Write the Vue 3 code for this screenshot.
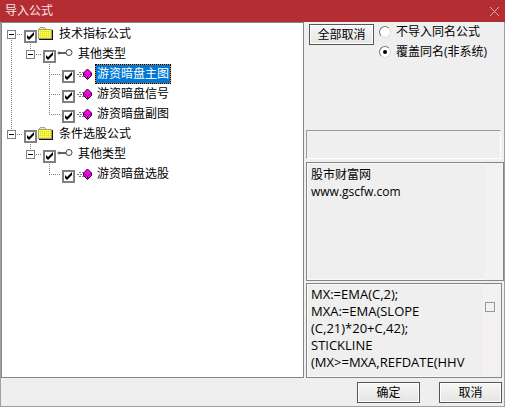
<template>
  <div class="dialog">
    <header class="title-bar">
      <h1 class="title">导入公式</h1>
      <button class="btn-close" type="button" aria-label="关闭">
        <svg width="11" height="11" viewBox="0 0 11 11"><path d="M1 1L10 10M10 1L1 10" stroke="#e6a9ab" fill="none" /></svg>
      </button>
    </header>

    <main class="content">
      <div class="tree">
        <div v-for="nodo in nodos" :key="nodo.id" class="tree-row">
          <svg v-for="(guia, i) in nodo.guias" :key="i" class="guide" width="19" height="20" viewBox="0 0 19 20" shape-rendering="crispEdges">
            <path v-if="guia !== 'vacio' && guia !== 'inicio'" class="dots" d="M9.5 0V10" />
            <path v-if="guia === 'linea' || guia === 'rama' || guia === 'inicio'" class="dots" d="M9.5 10V20" />
            <path v-if="guia !== 'vacio' && guia !== 'linea'" class="dots" d="M9 10.5H20" />
            <g v-if="i === nodo.guias.length - 1 && nodo.tipo !== 'formula'">
              <rect x="5.5" y="6.5" width="8" height="8" fill="#fff" stroke="#808080" />
              <path d="M7 10.5H12" stroke="#000" />
            </g>
          </svg>
          <input :id="nodo.id" v-model="nodo.marcado" class="check" type="checkbox">
          <svg v-if="nodo.tipo === 'carpeta'" class="icon" width="16" height="14" viewBox="0 0 16 14" shape-rendering="crispEdges">
            <path d="M0 2H1V1H2V0H7V1H8V2H14V12H0Z" fill="#a3a37c" />
            <path d="M1 3H13V11H1Z" fill="#f6f200" />
            <path d="M2 1H7V2H2Z" fill="#ece99a" />
            <path d="M1 3.5H13M1 5.5H13M1 7.5H13M1 9.5H13" stroke="#ffffa8" stroke-dasharray="1 1" />
            <path d="M2 4.5H13M2 6.5H13M2 8.5H13M2 10.5H13" stroke="#e0dc50" stroke-dasharray="1 1" />
            <path d="M1 12.5H14.5V3" fill="none" stroke="#111" />
          </svg>
          <svg v-else-if="nodo.tipo === 'grupo'" class="icon" width="16" height="14" viewBox="0 0 16 14">
            <circle cx="2" cy="6" r="1" fill="#aaa" stroke="#444" />
            <path d="M3 6H9" stroke="#222" stroke-width="1.4" />
            <circle cx="12" cy="5.5" r="3" fill="#fff" stroke="#444" />
          </svg>
          <svg v-else class="icon" width="16" height="14" viewBox="0 0 16 14">
            <path d="M3 5.5H7M1 7.5H7M3 9.5H8" stroke="#777" stroke-dasharray="2 1" shape-rendering="crispEdges" />
            <path d="M11.5 2L15.5 6V8.5L11.5 12.5L7.5 8.5V6Z" fill="#f0e" stroke="#300030" />
            <path d="M8 6.5L11.5 9.5L15 6.5M11.5 9.5V12" fill="none" stroke="#80007a" />
          </svg>
          <label :for="nodo.id" class="node-text" :class="{ selected: nodo.id === seleccionado }" @click="seleccionado = nodo.id">{{ nodo.texto }}</label>
        </div>
      </div>

      <section class="side">
        <div class="options">
          <button class="btn btn-clear" type="button" @click="cancelarTodo">全部取消</button>
          <div class="radios">
            <label class="radio"><input v-model="modo" type="radio" name="modo" value="omitir"><span>不导入同名公式</span></label>
            <label class="radio"><input v-model="modo" type="radio" name="modo" value="reemplazar"><span>覆盖同名(非系统)</span></label>
          </div>
        </div>
        <div class="status"></div>
        <div class="box info">
          <textarea v-model="descripcion" class="text" aria-label="说明" readonly></textarea>
          <div class="track"></div>
        </div>
        <div class="box source">
          <textarea v-model="codigo" class="text code" aria-label="公式源码" readonly></textarea>
          <div class="track"><span class="thumb"></span></div>
        </div>
      </section>
    </main>

    <footer class="actions">
      <button class="btn btn-action" type="button">确定</button>
      <button class="btn btn-action" type="button">取消</button>
    </footer>
  </div>
</template>

<script setup>
import { ref } from 'vue';

// Cada guía es una columna de líneas punteadas a la izquierda del nodo
const nodos = ref([
  { id: 'n1', tipo: 'carpeta', texto: '技术指标公式', guias: ['inicio'], marcado: true },
  { id: 'n2', tipo: 'grupo', texto: '其他类型', guias: ['linea', 'fin'], marcado: true },
  { id: 'n3', tipo: 'formula', texto: '游资暗盘主图', guias: ['linea', 'vacio', 'rama'], marcado: true },
  { id: 'n4', tipo: 'formula', texto: '游资暗盘信号', guias: ['linea', 'vacio', 'rama'], marcado: true },
  { id: 'n5', tipo: 'formula', texto: '游资暗盘副图', guias: ['linea', 'vacio', 'fin'], marcado: true },
  { id: 'n6', tipo: 'carpeta', texto: '条件选股公式', guias: ['fin'], marcado: true },
  { id: 'n7', tipo: 'grupo', texto: '其他类型', guias: ['vacio', 'fin'], marcado: true },
  { id: 'n8', tipo: 'formula', texto: '游资暗盘选股', guias: ['vacio', 'vacio', 'fin'], marcado: true },
]);

const seleccionado = ref('n3');
const modo = ref('reemplazar');
const descripcion = ref('股市财富网\nwww.gscfw.com');
const codigo = ref('MX:=EMA(C,2);\nMXA:=EMA(SLOPE\n(C,21)*20+C,42);\nSTICKLINE\n(MX>=MXA,REFDATE(HHV');

const cancelarTodo = () => {
  nodos.value.forEach(nodo => {
    nodo.marcado = false;
  });
};
</script>

<style>
body { background: #efefef; }
</style>

<style scoped>
.dialog { display: flex; flex-direction: column; min-height: 100vh; box-sizing: border-box; border: 1px solid #a0a0a0; border-top: none; background: #efefef; color: #000; font-family: "Open Sans", "Noto Sans CJK SC", sans-serif; font-size: 12px; line-height: 16px; }
button, textarea { font: inherit; color: inherit; }

.title-bar { display: flex; align-items: center; justify-content: space-between; height: 22px; margin: 0 -1px; padding: 0 5px; background: #b32d32; color: #f8e8e8; }
.title { margin: 0; font-size: 12px; font-weight: 400; }
.btn-close { display: flex; padding: 0; border: none; background: none; }

.content { display: flex; flex: 1; gap: 2px; }
.tree { flex: 1; box-sizing: border-box; padding-top: 1px; border: 1px solid #868686; background: #fff; }
.tree-row { display: flex; align-items: center; height: 20px; }
.guide { flex: none; overflow: visible; }
.dots { fill: none; stroke: #808080; stroke-dasharray: 1 1; }
.check { position: relative; flex: none; box-sizing: border-box; appearance: none; width: 13px; height: 13px; margin: 5px 1px 0 3px; border: 2px solid #808080; background: #fff; }
.check:checked::before { content: ""; position: absolute; inset: 0; background: #000; clip-path: polygon(1px 3px, 3px 5px, 8px 0, 8px 3px, 3px 8px, 1px 6px); }
.icon { flex: none; margin-right: 3px; }
.node-text { box-sizing: border-box; height: 20px; padding: 0 1px; border: 1px solid transparent; line-height: 18px; }
.node-text.selected { border: 1px dotted #000; background: linear-gradient(#0078d7, #0078d7) padding-box, #f08a28; color: #fff; }

.side { display: flex; flex: none; flex-direction: column; width: 198px; }
.options { display: flex; flex: 1; gap: 5px; padding: 2px 0 0 3px; }
.btn { box-sizing: border-box; height: 21px; padding: 0; border: 1px solid #555; box-shadow: inset 0 0 0 1px #fff; background: linear-gradient(#f6f6f6, #e5e5e3); line-height: 17px; }
.btn-clear { flex: none; width: 65px; }
.radios { display: flex; flex-direction: column; }
.radio { display: flex; align-items: center; gap: 5px; height: 20px; margin-top: -2px; margin-bottom: 2px; white-space: nowrap; }
.radio input { position: relative; flex: none; box-sizing: border-box; appearance: none; width: 12px; height: 12px; margin: 0; border: 1px solid; border-color: #777 #ddd #ddd #777; border-radius: 50%; background: #fff; }
.radio input:checked::before { content: ""; position: absolute; inset: 3px; border-radius: 50%; background: #000; }
.status { box-sizing: border-box; height: 29px; margin: 0 3px 3px 0; border: 1px solid; border-color: #9a9a9a #fff #fff #9a9a9a; }
.box { display: flex; box-sizing: border-box; border: 1px solid #868686; box-shadow: inset 0 0 0 1px #fafafa; }
.text { flex: 1; min-width: 0; box-sizing: border-box; padding: 3px 0 0 4px; border: none; outline: none; resize: none; overflow: hidden; background: none; line-height: 17px; white-space: pre; }
.code { padding-top: 2px; font-size: 13px; }
.info { height: 119px; margin-bottom: 2px; }
.source { height: 95px; margin-right: 2px; }
.track { flex: none; width: 18px; background: #f3f2f0; }
.thumb { display: block; box-sizing: border-box; width: 10px; height: 10px; margin: 18px 0 0 2px; border: 1px solid #999; }

.actions { display: flex; justify-content: flex-end; gap: 19px; padding: 4px 2px 3px; }
.btn-action { width: 63px; }
</style>
